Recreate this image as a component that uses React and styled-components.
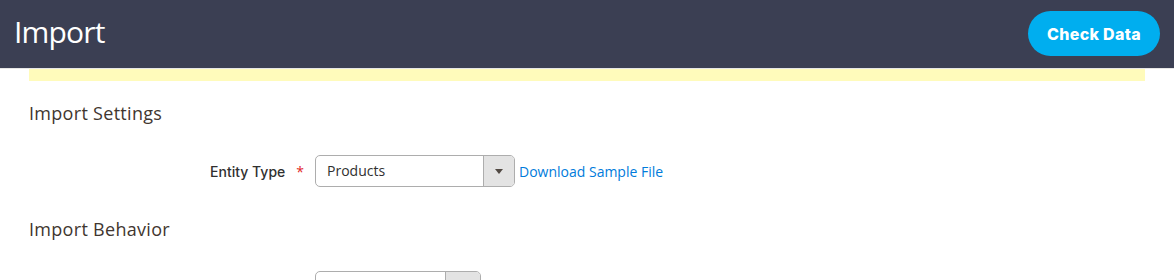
import React from "react";
import styled, { createGlobalStyle } from "styled-components";

const GlobalStyle = createGlobalStyle`
  body {
    margin: 0;
    background: #fff;
    font-family: "Open Sans", "Liberation Sans", sans-serif;
    color: #303030;
  }
`;

const App = () => {
  return (
    <>
      <GlobalStyle />
      <Header>
        <Titulo>Import</Titulo>
        <BotaoCheck>Check Data</BotaoCheck>
      </Header>
      <Conteudo>
        <Aviso />
        <Secao>
          <SecaoTitulo>Import Settings</SecaoTitulo>
          <Campo>
            <Rotulo>
              Entity Type<Asterisco>*</Asterisco>
            </Rotulo>
            <Select largura={200}>
              <SelectValor>Products</SelectValor>
              <SelectSeta largura={30}>
                <Triangulo />
              </SelectSeta>
            </Select>
            <Link href="#">Download Sample File</Link>
          </Campo>
        </Secao>
        <Secao>
          <SecaoTitulo>Import Behavior</SecaoTitulo>
          <Campo>
            <Rotulo>
              Import Behavior<Asterisco>*</Asterisco>
            </Rotulo>
            <Select largura={166}>
              <SelectValor>Add/Update</SelectValor>
              <SelectSeta largura={34}>
                <Triangulo />
              </SelectSeta>
            </Select>
          </Campo>
        </Secao>
      </Conteudo>
    </>
  );
};

const Header = styled.header`
  height: 68px;
  background: #3b3f53;
  display: flex;
  align-items: center;
  justify-content: space-between;
  padding: 0 14px 0 15px;
  border-bottom: 1px solid #e6e6e6;
`;

const Titulo = styled.h1`
  margin: -6px 0 0 -1px;
  font-family: "Open Sans", sans-serif;
  font-weight: 400;
  font-size: 30px;
  letter-spacing: -0.8px;
  color: #ffffff;
`;

const BotaoCheck = styled.button`
  width: 132px;
  height: 45px;
  border: none;
  border-radius: 23px;
  background: #00aeef;
  color: #fff;
  font-family: "Inter", sans-serif;
  font-weight: 800;
  font-size: 16px;
  letter-spacing: 0.3px;
  cursor: pointer;
  margin-top: -1px;
`;

const Conteudo = styled.main`
  padding: 0 29px;
`;

const Aviso = styled.div`
  height: 12px;
  background: #fffbbb;
`;

const Secao = styled.section`
  padding-top: 20px;
`;

const SecaoTitulo = styled.h2`
  margin: 0;
  font-size: 18px;
  line-height: 24px;
  letter-spacing: 0.3px;
  font-weight: 400;
  color: #41362f;
`;

const Campo = styled.div`
  display: flex;
  align-items: center;
  margin: 30px 0 10px;
`;

const Rotulo = styled.label`
  width: 275px;
  padding-right: 11px;
  text-align: right;
  font-family: "Inter", sans-serif;
  font-weight: 500;
  font-size: 14px;
  color: #303030;
`;

const Asterisco = styled.span`
  color: #e22626;
  font-family: "Open Sans", sans-serif;
  font-weight: 400;
  margin-left: 11px;
`;

const Select = styled.div`
  width: ${({ largura }) => largura}px;
  height: 32px;
  box-sizing: border-box;
  border: 1px solid #adadad;
  border-radius: 5px;
  display: flex;
  overflow: hidden;
`;

const SelectValor = styled.span`
  flex: 1;
  padding-left: 11px;
  font-size: 14px;
  line-height: 30px;
  color: #303030;
`;

const SelectSeta = styled.span`
  width: ${({ largura }) => largura}px;
  background: #e3e3e3;
  border-left: 1px solid #adadad;
  display: flex;
  align-items: center;
  justify-content: center;
`;

const Triangulo = styled.span`
  width: 0;
  height: 0;
  border-left: 4px solid transparent;
  border-right: 4px solid transparent;
  border-top: 5px solid #514943;
`;

const Link = styled.a`
  margin-left: 4px;
  font-size: 14px;
  color: #007bdb;
  text-decoration: none;
`;

export default App;
